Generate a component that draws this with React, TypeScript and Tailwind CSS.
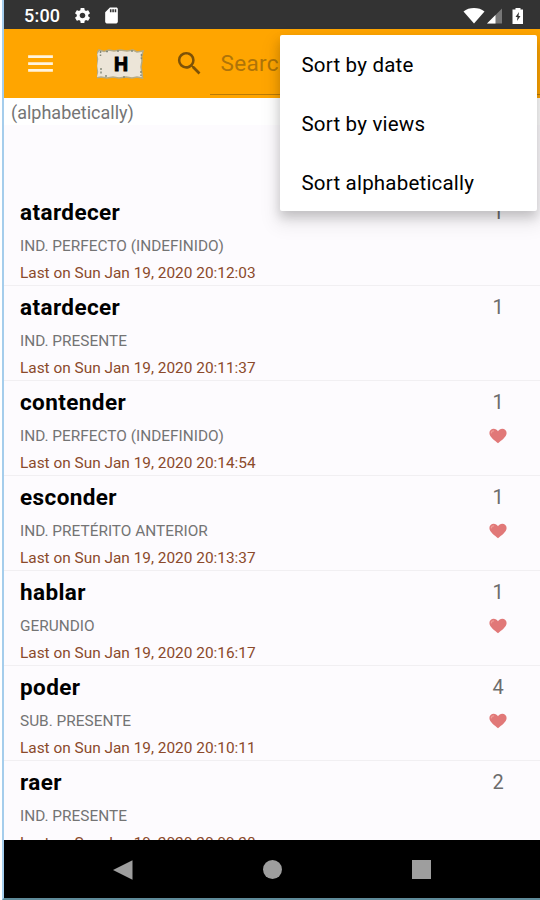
import React from 'react';
import { MdMenu, MdSdCard, MdSearch, MdSettings } from 'react-icons/md';

type Entry = {
  verb: string;
  tense: string;
  last: string;
  views: number;
  liked: boolean;
};

const entries: Entry[] = [
  { verb: 'atardecer', tense: 'IND. PERFECTO (INDEFINIDO)', last: '20:12:03', views: 1, liked: false },
  { verb: 'atardecer', tense: 'IND. PRESENTE', last: '20:11:37', views: 1, liked: false },
  { verb: 'contender', tense: 'IND. PERFECTO (INDEFINIDO)', last: '20:14:54', views: 1, liked: true },
  { verb: 'esconder', tense: 'IND. PRETÉRITO ANTERIOR', last: '20:13:37', views: 1, liked: true },
  { verb: 'hablar', tense: 'GERUNDIO', last: '20:16:17', views: 1, liked: true },
  { verb: 'poder', tense: 'SUB. PRESENTE', last: '20:10:11', views: 4, liked: true },
  { verb: 'raer', tense: 'IND. PRESENTE', last: '20:09:28', views: 2, liked: false },
];

const sortOptions = ['Sort by date', 'Sort by views', 'Sort alphabetically'];

const Heart = () => (
  <svg viewBox="0 0 18 16" className="h-4 w-[18px]">
    <path
      d="M9 15.300C6 12.600.4 9.300.4 5.100.4 2.600 2.300.8 4.700.8 6.500.8 8.100 1.700 9 3.200 9.900 1.700 11.500.8 13.300.8c2.400 0 4.300 1.800 4.300 4.300C17.600 9.300 12 12.600 9 15.300z"
      fill="#e17878"
    />
    <path d="M2.400 4.800c.1-1.200 1-2 2.200-2" fill="none" stroke="#ef9c96" strokeWidth="1.300" strokeLinecap="round" />
  </svg>
);

const StatusBar = () => (
  <header className="flex h-[29px] shrink-0 items-center bg-[#333333] pt-0.5 pl-5 text-white">
    <span className="w-[49px] text-[18px] font-medium tracking-[0.2px]">5:00</span>
    <MdSettings className="size-[19px]" />
    <MdSdCard className="ml-2.5 size-[19px]" />
    <svg viewBox="0 0 62 18" className="mr-[15px] ml-auto h-[18px] w-[62px]">
      <path d="M.5 4.500C6-.1 16-.1 21.500 4.500L11 16.500z" fill="#fff" />
      <path d="M39 1.500V16.500H24z" fill="#777" />
      <path d="M32.500 8V16.500H24z" fill="#fff" />
      <path d="M52.500 1h5v1.500H60V17H49.500V2.500h3z" fill="#fff" />
      <path d="M56 5l-3.500 5h2l-.5 4 3.500-5h-2z" fill="#333" />
    </svg>
  </header>
);

const Logo = () => (
  <svg viewBox="0 0 48 32" className="ml-10 h-8 w-12">
    <path
      d="M2 2l5 1.500 5-1.500 5 1 6-1 7 1 6-1 4 2 6-1-1.500 6 .5 4-1 6 1 6 .5 5-5.500-1-5 1-6-1-7 1-6-1-6 1-6-1-5 1 1.500-6-1-6 1-7-1-5z"
      fill="#ece5d8"
      stroke="#b5ab86"
      strokeWidth="1.500"
    />
    <path
      d="M3.500 3v5M4 20v7M44.500 6v5M44 23v5M9 3.500h3M20 3h2M34 3h3M8 28h3M26 29h3"
      stroke="#858b7b"
      strokeWidth="1.500"
      strokeDasharray="2 1.500"
    />
    <text x="24" y="22.500" textAnchor="middle" fontFamily="Liberation Sans" fontSize="19.500" fontWeight="700" stroke="#000" strokeWidth="1">
      H
    </text>
  </svg>
);

const Toolbar = () => (
  <div className="flex h-[69px] shrink-0 items-center bg-[#ffa500]">
    <MdMenu className="ml-5 size-[33px] text-[#fff4df]" />
    <Logo />
    <MdSearch className="ml-[28.500px] size-[31px] text-[#7d5207]" />
    <div className="mt-2 ml-[5px] flex h-[54px] flex-1 items-center border-b border-[#b97b08] pb-1.5 pl-[11px] text-[22.500px] tracking-[0.3px] text-[#af7409]">
      Search
    </div>
  </div>
);

const EntryRow = ({ entry }: { entry: Entry }) => (
  <li className="flex h-[95px] justify-between border-b border-[#f1eff2] pr-[31px] pl-4">
    <div>
      <h2 className="mt-[7px] text-[22.500px] leading-7 font-bold tracking-[0.4px] text-black">{entry.verb}</h2>
      <p className="mt-2.5 text-[15.400px] leading-5 text-[#747474]">{entry.tense}</p>
      <p className="mt-[7px] text-[15.400px] leading-5 text-[#8b4a2b]">Last on Sun Jan 19, 2020 {entry.last}</p>
    </div>
    <div className="flex w-[22px] flex-col items-center text-[#6c6c6c]">
      <span className="mt-[7px] text-[20px] leading-7">{entry.views}</span>
      {entry.liked && (
        <span className="mt-3">
          <Heart />
        </span>
      )}
    </div>
  </li>
);

const SortMenu = () => (
  <ul className="absolute top-[35px] right-[3px] h-[176px] w-[257px] rounded-xs bg-white pt-px text-black shadow-[0_6px_12px_rgba(0,0,0,0.2),0_10px_18px_6px_rgba(0,0,0,0.06)]">
    {sortOptions.map((option) => (
      <li key={option} className="flex h-[59px] items-center pl-[21.500px] text-[20.500px] tracking-[0.2px]">
        {option}
      </li>
    ))}
  </ul>
);

const NavBar = () => (
  <nav className="flex h-[58px] shrink-0 items-center bg-black pt-px text-[#9e9e9e]">
    <svg viewBox="0 0 20 20" className="ml-[109px] size-5 fill-current">
      <path d="M0 10L19.500.2v19.600z" />
    </svg>
    <span className="ml-[130px] size-[19px] rounded-full bg-[#9e9e9e]" />
    <span className="ml-[130px] size-[19px] bg-[#9e9e9e]" />
  </nav>
);

export default function App() {
  return (
    <div className="h-[900px] w-[540px] overflow-hidden bg-white pl-0.5 font-['Roboto',sans-serif]">
      <div className="relative flex h-full flex-col border-b-2 border-l-2 border-b-[#5f8b99] border-l-[#a5cdec]">
        <StatusBar />
        <Toolbar />
        <main className="flex min-h-0 flex-1 flex-col overflow-hidden bg-[#fdfbfe]">
          <p className="h-[27px] shrink-0 bg-white pl-[7px] text-[18px] leading-[29px] text-[#757575]">(alphabetically)</p>
          <ul className="mt-[66px]">
            {entries.map((entry) => (
              <EntryRow key={entry.last} entry={entry} />
            ))}
          </ul>
        </main>
        <NavBar />
        <SortMenu />
      </div>
    </div>
  );
}
